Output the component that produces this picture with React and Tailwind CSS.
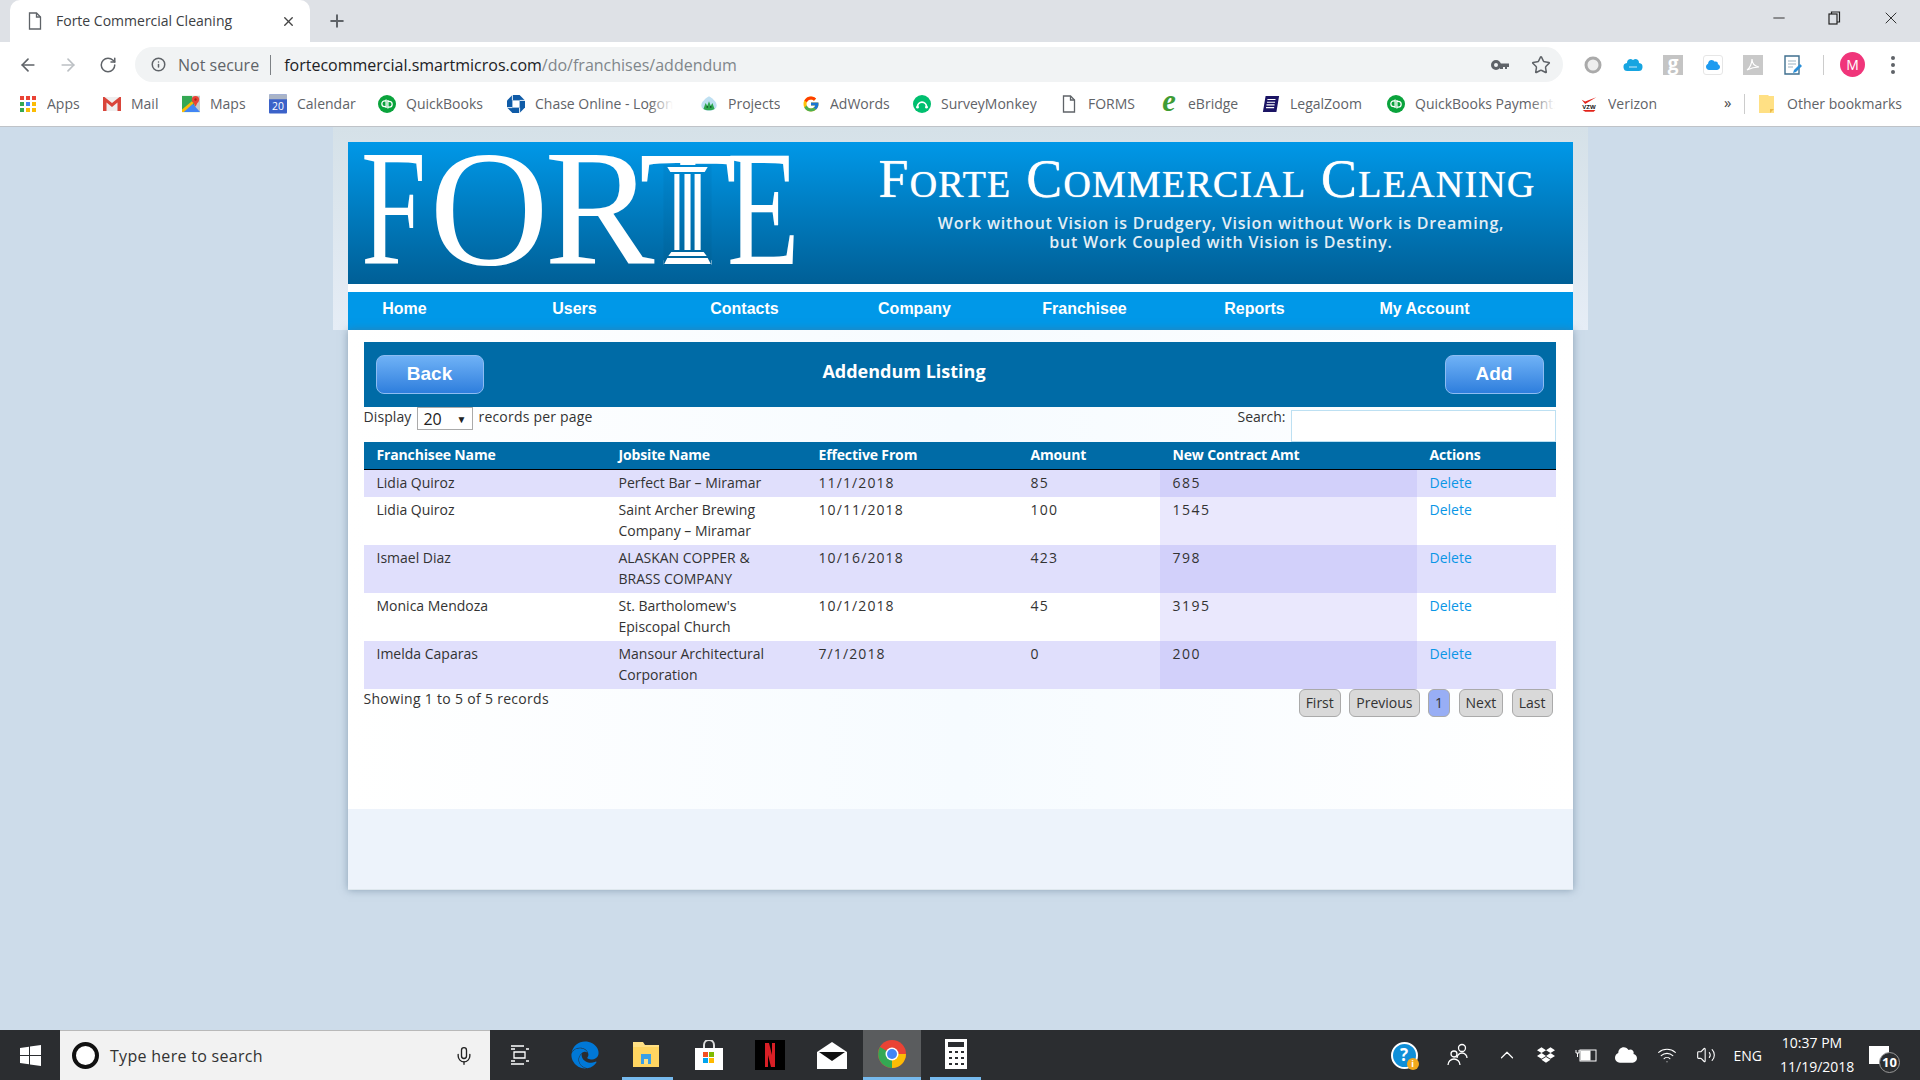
import { ArrowLeft, ArrowRight, RotateCw, Info, Star, Plus, X, Mic, ChevronUp, Volume2, Minus, Wifi } from 'lucide-react'
import { FcGoogle } from 'react-icons/fc'
import { FaEdge, FaDropbox, FaCloud } from 'react-icons/fa'

const navItems = ['Home', 'Users', 'Contacts', 'Company', 'Franchisee', 'Reports', 'My Account']

const rows = [
  { name: 'Lidia Quiroz', site: 'Perfect Bar – Miramar', from: '11/1/2018', amount: '85', total: '685' },
  { name: 'Lidia Quiroz', site: 'Saint Archer Brewing Company – Miramar', from: '10/11/2018', amount: '100', total: '1545' },
  { name: 'Ismael Diaz', site: 'ALASKAN COPPER & BRASS COMPANY', from: '10/16/2018', amount: '423', total: '798' },
  { name: 'Monica Mendoza', site: "St. Bartholomew's Episcopal Church", from: '10/1/2018', amount: '45', total: '3195' },
  { name: 'Imelda Caparas', site: 'Mansour Architectural Corporation', from: '7/1/2018', amount: '0', total: '200' },
]

function AppsIcon() {
  const colors = ['#ea4335', '#ea4335', '#ea4335', '#34a853', '#4285f4', '#fbbc05', '#34a853', '#fbbc05', '#fbbc05']
  return (
    <svg width="18" height="18" viewBox="0 0 18 18">
      {colors.map((c, i) => (
        <rect key={i} x={1 + (i % 3) * 6} y={1 + Math.floor(i / 3) * 6} width="4" height="4" fill={c} />
      ))}
    </svg>
  )
}

function MailIcon() {
  return (
    <svg width="19" height="18" viewBox="0 0 18 18">
      <path d="M0 2h18v14H0z" fill="#efefef" />
      <path d="M0 2v14h3.500V7.500L9 12l5.500-4.500V16H18V2h-1.500L9 8 1.500 2z" fill="#d9453a" />
    </svg>
  )
}

function MapsIcon() {
  return (
    <svg width="20" height="20" viewBox="0 0 20 20">
      <path d="M0 1h20v18H0z" fill="#34a853" />
      <path d="M11 1h9v18h-4z" fill="#c9c9c9" />
      <path d="M0 19 11 9l9 10z" fill="#4285f4" />
      <path d="M0 16 11 7l2 2L2 19H0z" fill="#fbbc05" />
      <circle cx="15" cy="5" r="4" fill="#ea4335" />
      <path d="M12 7h6l-3 6z" fill="#ea4335" />
      <circle cx="15" cy="5" r="1.300" fill="#a52714" />
    </svg>
  )
}

function CalendarIcon() {
  return (
    <svg width="19" height="20" viewBox="0 0 19 20">
      <rect y="0" width="19" height="20" rx="1" fill="#3b62c9" />
      <rect y="0" width="19" height="5" fill="#aab4c6" />
      <text x="9.500" y="16" textAnchor="middle" fontSize="11" fill="#fff" fontFamily="Open Sans">20</text>
    </svg>
  )
}

function QbIcon() {
  return (
    <svg width="20" height="20" viewBox="0 0 20 20">
      <circle cx="10" cy="10" r="10" fill="#0aa33c" />
      <path d="M9 5v9.500M11 5.500v9.500" stroke="#fff" strokeWidth="1.400" />
      <path d="M9 6.500H7.500a3 3 0 0 0 0 6.500H9M11 7h1.500a3 3 0 0 1 0 6.500H11" fill="none" stroke="#fff" strokeWidth="1.400" />
    </svg>
  )
}

function ChaseIcon() {
  return (
    <svg width="20" height="20" viewBox="0 0 20 20">
      <path d="M6 0h8l6 6v8l-6 6H6l-6-6V6z" fill="#0f5ba7" />
      <rect x="6" y="6" width="8" height="8" fill="#fff" />
      <path d="M6 0v6M14 20v-6M0 14h6M20 6h-6" stroke="#fff" strokeWidth="1" />
    </svg>
  )
}

function ProjectsIcon() {
  return (
    <svg width="21" height="19" viewBox="0 0 21 19">
      <path d="M10.500 1c5 3 9 7 9 11a9 6 0 0 1-18 0c0-4 4-8 9-11z" fill="#bfe0f2" />
      <path d="M4 16l2.500-7 2 3 2-5 2 5 2-3 2.500 7c-3 2-10 2-13 0z" fill="#2fa84f" />
      <circle cx="8.500" cy="13.500" r="1" fill="#12502a" />
      <circle cx="12.500" cy="13.500" r="1" fill="#12502a" />
    </svg>
  )
}

function SurveyIcon() {
  return (
    <svg width="20" height="20" viewBox="0 0 20 20">
      <circle cx="10" cy="10" r="10" fill="#00bf6f" />
      <path d="M5 13a5 5 0 0 1 10 0" fill="none" stroke="#fff" strokeWidth="2" />
      <circle cx="5" cy="13.500" r="1.500" fill="#fff" />
      <circle cx="15" cy="13.500" r="1.500" fill="#fff" />
    </svg>
  )
}

function FileIcon({ color = '#5f6368' }) {
  return (
    <svg width="16" height="18" viewBox="0 0 16 18" fill="none" stroke={color} strokeWidth="1.300">
      <path d="M2.500 1h7l4 4v12h-11z" />
      <path d="M9.500 1v4h4" />
    </svg>
  )
}

function EBridgeIcon() {
  return (
    <svg width="20" height="24" viewBox="0 0 20 24">
      <text x="10" y="20" textAnchor="middle" fontSize="34" fontStyle="italic" fontWeight="700" fill="#3f9c35" fontFamily="Liberation Serif">e</text>
    </svg>
  )
}

function LegalZoomIcon() {
  return (
    <svg width="20" height="20" viewBox="0 0 20 20">
      <path d="M4 1h15l-3 18H1z" fill="#1b1464" />
      <path d="M6 5h9M5.500 8h9M5 11h9M4.500 14h9" stroke="#fff" strokeWidth="1.200" />
    </svg>
  )
}

function VerizonIcon() {
  return (
    <svg width="21" height="20" viewBox="0 0 21 20">
      <path d="M2 5l4 5L19 2 6 7z" fill="#e2231a" />
      <rect x="0" y="10" width="21" height="6" fill="#fff" />
      <text x="10.500" y="15.500" textAnchor="middle" fontSize="7" fontWeight="700" fill="#111" fontFamily="Liberation Sans">VZW</text>
      <path d="M3 17h15l-2 2H6z" fill="#e2231a" />
    </svg>
  )
}

function FolderIcon() {
  return (
    <svg width="17" height="20" viewBox="0 0 17 20">
      <path d="M1 1h9l1 1h5v17H1z" fill="#ffe084" />
      <path d="M12 19v-4h4z" fill="#e9b949" />
    </svg>
  )
}

const bookmarks = [
  { label: 'Apps', icon: <AppsIcon />, width: 'w-[84px]' },
  { label: 'Mail', icon: <MailIcon />, width: 'w-[79px]' },
  { label: 'Maps', icon: <MapsIcon />, width: 'w-[87px]' },
  { label: 'Calendar', icon: <CalendarIcon />, width: 'w-[109px]' },
  { label: 'QuickBooks', icon: <QbIcon />, width: 'w-[129px]' },
  { label: 'Chase Online - Logon', icon: <ChaseIcon />, width: 'w-[193px]', fade: true },
  { label: 'Projects', icon: <ProjectsIcon />, width: 'w-[102px]' },
  { label: 'AdWords', icon: <FcGoogle size={18} />, width: 'w-[111px]' },
  { label: 'SurveyMonkey', icon: <SurveyIcon />, width: 'w-[147px]' },
  { label: 'FORMS', icon: <FileIcon />, width: 'w-[100px]' },
  { label: 'eBridge', icon: <EBridgeIcon />, width: 'w-[102px]' },
  { label: 'LegalZoom', icon: <LegalZoomIcon />, width: 'w-[125px]' },
  { label: 'QuickBooks Payments', icon: <QbIcon />, width: 'w-[193px]', fade: true },
  { label: 'Verizon', icon: <VerizonIcon />, width: 'w-[144px]' },
]

function Bookmark({ item }) {
  return (
    <div className={`${item.width} flex items-center gap-[10px] shrink-0`}>
      <span className="w-[18px] h-[20px] flex items-center justify-center shrink-0">{item.icon}</span>
      <span className="relative block max-w-[140px] overflow-hidden whitespace-nowrap">
        {item.label}
        {item.fade && <span className="absolute right-0 top-0 bottom-0 w-[24px] bg-gradient-to-r from-transparent to-white" />}
      </span>
    </div>
  )
}

function BrowserChrome() {
  return (
    <div className="bg-white text-[#3c4043] border-b border-[#bfc3c8] h-[127px] shrink-0">
      <div className="h-[42px] bg-[#dee1e6] flex items-end pl-[10px]">
        <div className="w-[300px] h-[42px] bg-white rounded-t-[10px] flex items-center pl-[17px] pr-[14px] text-[14px]">
          <FileIcon />
          <span className="ml-[13px] flex-1 -mt-[2px]">Forte Commercial Cleaning</span>
          <X size={15} strokeWidth={2.2} className="text-[#444]" />
        </div>
        <Plus size={20} strokeWidth={2.4} className="ml-[17px] mb-[11px] text-[#5f6368]" />
        <div className="ml-auto flex items-center h-full pb-[6px] pr-[19px] gap-[40px] text-[#222]">
          <Minus size={18} strokeWidth={1.2} />
          <svg width="13" height="14" viewBox="0 0 13 14" fill="none" stroke="#222" strokeWidth="1.200">
            <rect x="1" y="3" width="8" height="10" />
            <path d="M3.500 3V1h8v10H9" />
          </svg>
          <X size={20} strokeWidth={1.1} />
        </div>
      </div>
      <div className="h-[42px] pt-[3px] flex items-center pl-[18px]">
        <ArrowLeft size={20} strokeWidth={2} className="text-[#5f6368]" />
        <ArrowRight size={20} strokeWidth={2} className="ml-[20px] text-[#bcc0c4]" />
        <RotateCw size={18} strokeWidth={2} className="ml-[21px] text-[#5f6368]" />
        <div className="ml-[18px] w-[1428px] h-[35px] rounded-full bg-[#f1f3f4] flex items-center pl-[16px] pr-[12px] text-[16px]">
          <Info size={15} strokeWidth={2.4} className="text-[#5f6368]" />
          <span className="ml-[12px] text-[#5f6368]">Not secure</span>
          <span className="ml-[11px] w-px h-[20px] bg-[#7d8185]" />
          <span className="ml-[13px] text-[#202124]">fortecommercial.smartmicros.com<span className="text-[#80868b]">/do/franchises/addendum</span></span>
          <span className="ml-auto flex items-center gap-[22px]">
            <svg width="18" height="12" viewBox="0 0 18 12">
              <circle cx="5" cy="6" r="3.500" fill="none" stroke="#5f6368" strokeWidth="3" />
              <path d="M9 4.500h9V8h-2v2h-2V8h-2v2H9z" fill="#5f6368" />
            </svg>
            <Star size={20} strokeWidth={1.8} className="text-[#5f6368]" />
          </span>
        </div>
        <div className="ml-[20px] flex items-center gap-[20px]">
          <svg width="20" height="20" viewBox="0 0 20 20">
            <circle cx="10" cy="10" r="7" fill="#eee" stroke="#aaa" strokeWidth="3" />
          </svg>
          <svg width="20" height="20" viewBox="0 0 20 20">
            <path d="M5 16a4 4 0 0 1-1-8 4 4 0 0 1 4-4l2 1 2-1a4 4 0 0 1 4 4 4 4 0 0 1-1 8z" fill="#16a5e1" />
            <path d="M6 12h8" stroke="#8ed3f2" strokeWidth="1.500" />
          </svg>
          <span className="w-[20px] h-[20px] bg-[#c4c4c4] text-white font-bold text-[19px] leading-[17px] text-center">g</span>
          <span className="w-[20px] h-[20px] rounded-[3px] border border-[#e6e6e6] flex items-center justify-center">
            <FaCloud size={14} className="text-[#1d9bf0]" />
          </span>
          <svg width="20" height="20" viewBox="0 0 20 20">
            <rect width="20" height="20" fill="#c9c9c9" />
            <path d="M4 15c3-2 5-7 5-11 0 4 2 7 7 8-4 0-8 1-12 3z" fill="none" stroke="#fff" strokeWidth="1.200" />
          </svg>
          <svg width="20" height="20" viewBox="0 0 20 20" fill="none">
            <path d="M2 1h14v18H2z" stroke="#3f6f8f" strokeWidth="1.400" />
            <path d="M5 6h8M5 9h8M5 12h5" stroke="#9db3c2" strokeWidth="1.200" />
            <path d="M10 18l1-3 6-6 2 2-6 6z" fill="#2b8fd8" />
          </svg>
        </div>
        <span className="ml-[20px] w-px h-[20px] bg-[#ccc]" />
        <span className="ml-[16px] w-[25px] h-[25px] rounded-full bg-[#f0357a] text-white text-[14px] flex items-center justify-center">M</span>
        <span className="ml-[26px] flex flex-col gap-[3px]">
          <span className="w-[4px] h-[4px] rounded-full bg-[#5f6368]" />
          <span className="w-[4px] h-[4px] rounded-full bg-[#5f6368]" />
          <span className="w-[4px] h-[4px] rounded-full bg-[#5f6368]" />
        </span>
      </div>
      <div className="h-[39px] flex items-center pl-[19px] text-[14px] text-[#5f6368]">
        {bookmarks.map((b) => (
          <Bookmark key={b.label} item={b} />
        ))}
        <span className="text-[15px] text-[#444] w-[20px] -mt-[2px]">»</span>
        <span className="w-px h-[20px] bg-[#ccc]" />
        <span className="ml-[13px] flex items-center gap-[12px]">
          <FolderIcon />
          Other bookmarks
        </span>
      </div>
    </div>
  )
}

function LogoT() {
  return (
    <span className="relative inline-block">
      T
      <svg width="50" height="100" viewBox="0 0 48 100" preserveAspectRatio="none" className="absolute left-1/2 -translate-x-1/2 top-[23px]">
        <defs>
          <linearGradient id="shaft" x1="0" y1="0" x2="0" y2="1">
            <stop offset="0" stopColor="#0088d2" />
            <stop offset="1" stopColor="#006299" />
          </linearGradient>
        </defs>
        <rect x="0" y="0" width="48" height="100" fill="url(#shaft)" />
        <path d="M4 2h40l-3 5H7z" fill="#fff" />
        <rect x="11" y="9" width="5" height="76" fill="#fff" />
        <rect x="21" y="9" width="6" height="76" fill="#fff" />
        <rect x="31" y="9" width="6" height="76" fill="#fff" />
        <path d="M8 87h32l3 4H5z" fill="#fff" />
        <path d="M4 93h40l3 6H1z" fill="#fff" />
      </svg>
    </span>
  )
}

function Banner() {
  return (
    <div className="h-[142px] bg-gradient-to-b from-[#0098e8] to-[#005f96] flex text-white overflow-hidden">
      <div className="w-[500px] h-[133px] shrink-0 flex font-['Liberation_Serif'] text-[165px] leading-[133px] pl-[13px]">
        <span className="w-[69px] scale-x-[0.71] origin-left">F</span>
        <span className="w-[115px] origin-left">O</span>
        <span className="w-[94px] origin-left">R</span>
        <span className="w-[88px] origin-left scale-x-[0.97]"><LogoT /></span>
        <span className="w-[70px] scale-x-[0.72] origin-left">E</span>
      </div>
      <div className="flex-1 pl-[31px] pt-[7px]">
        <div className="font-['Liberation_Serif'] text-[54px] leading-[60px] tracking-[1.2px] [font-variant:small-caps] [text-shadow:0_0_1px_#ffffff] whitespace-nowrap">Forte Commercial Cleaning</div>
        <div className="w-[655px] pl-[30px] text-center text-[16px] leading-[18.5px] font-semibold tracking-[0.8px] text-[#e3eef5] mt-[5px] whitespace-nowrap">
          Work without Vision is Drudgery, Vision without Work is Dreaming,
          <br />
          but Work Coupled with Vision is Destiny.
        </div>
      </div>
    </div>
  )
}

function PageButton({ children, active }) {
  return (
    <span className={`h-[28px] px-[6px] rounded-[6px] border border-[#aaaaaa] flex items-center ${active ? 'bg-[#98aef5]' : 'bg-[#d9d9d9]'}`}>
      {children}
    </span>
  )
}

function HeaderButton({ children, width }) {
  return (
    <button className={`${width} h-[39px] rounded-[8px] border border-[#8dbcf2] bg-gradient-to-b from-[#6fb2f6] to-[#2d7edd] text-white font-['Liberation_Sans'] font-bold text-[19px]`}>
      {children}
    </button>
  )
}

function Listing() {
  return (
    <div className="w-[1225px] mx-auto shadow-[0_0_8px_rgba(80,110,135,0.55)] bg-[#edf3fb] h-[560px] border-b border-[#dfe8ee]">
      <div className="h-[479px] bg-gradient-to-r from-white via-[#f6fbff] to-white pl-[16px] pr-[17px] pt-[12px] text-[14px] text-[#333]">
        <div className="h-[65px] bg-[#006ba6] flex items-center px-[12px]">
          <HeaderButton width="w-[108px]">Back</HeaderButton>
          <h2 className="flex-1 pr-[120px] text-center text-white text-[18px] font-bold -mt-[6px]">Addendum Listing</h2>
          <HeaderButton width="w-[99px]">Add</HeaderButton>
        </div>
        <div className="h-[35px] flex justify-between">
          <div className="flex items-start leading-[20px]">
            <span className="tracking-[0.1px]">Display</span>
            <span className="ml-[6px] w-[56px] h-[23px] border border-[#aaa] bg-white flex items-center justify-between pl-[5px] pr-[6px] text-[16px] text-[#222]">
              20<span className="text-[10px] text-[#222]">▼</span>
            </span>
            <span className="ml-[5px] tracking-[0.2px]">records per page</span>
          </div>
          <div className="flex items-start leading-[20px]">
            <span>Search:</span>
            <input className="ml-[5px] w-[265px] h-[32px] mt-[3px] border border-[#bde0f2] bg-white" />
          </div>
        </div>
        <table className="w-full table-fixed border-collapse leading-[21px]">
          <colgroup>
            <col className="w-[242px]" />
            <col className="w-[200px]" />
            <col className="w-[212px]" />
            <col className="w-[142px]" />
            <col className="w-[257px]" />
            <col className="w-[139px]" />
          </colgroup>
          <thead>
            <tr className="h-[27px] bg-[#006ba6] text-white text-left font-bold border-b border-black tracking-[-0.15px]">
              <th className="pl-[13px] pb-[1px]">Franchisee Name</th>
              <th className="pl-[13px] pb-[1px]">Jobsite Name</th>
              <th className="pl-[13px] pb-[1px]">Effective From</th>
              <th className="pl-[13px] pb-[1px]">Amount</th>
              <th className="pl-[13px] pb-[1px]">New Contract Amt</th>
              <th className="pl-[13px] pb-[1px]">Actions</th>
            </tr>
          </thead>
          <tbody>
            {rows.map((r, i) => (
              <tr key={i} className={i % 2 === 0 ? 'bg-[#e0dffc]' : 'bg-white'}>
                <td className="px-[13px] pt-[2px] pb-[4px] align-top">{r.name}</td>
                <td className="px-[13px] pt-[2px] pb-[4px] align-top">{r.site}</td>
                <td className="px-[13px] pt-[2px] pb-[4px] align-top tracking-[1.1px]">{r.from}</td>
                <td className="px-[13px] pt-[2px] pb-[4px] align-top tracking-[1.2px]">{r.amount}</td>
                <td className={`px-[13px] pt-[2px] pb-[4px] align-top tracking-[1.5px] ${i % 2 === 0 ? 'bg-[#d2d0fa]' : 'bg-[#eae8fd]'}`}>{r.total}</td>
                <td className="px-[13px] pt-[2px] pb-[4px] align-top text-[#0a96e6]">Delete</td>
              </tr>
            ))}
          </tbody>
        </table>
        <div className="flex justify-between leading-[20px]">
          <span className="tracking-[0.3px]">Showing 1 to 5 of 5 records</span>
          <div className="flex gap-[8.5px] pr-[3px]">
            <PageButton>First</PageButton>
            <PageButton>Previous</PageButton>
            <PageButton active>1</PageButton>
            <PageButton>Next</PageButton>
            <PageButton>Last</PageButton>
          </div>
        </div>
      </div>
    </div>
  )
}

function ChromeLogo() {
  return (
    <svg width="28" height="28" viewBox="0 0 28 28">
      <circle cx="14" cy="14" r="14" fill="#ea4335" />
      <path d="M14 14 2 7A14 14 0 0 0 14 28z" fill="#34a853" />
      <path d="M14 14h14a14 14 0 0 1-14 14z" fill="#fbbc05" />
      <circle cx="14" cy="14" r="6.500" fill="#fff" />
      <circle cx="14" cy="14" r="5" fill="#4285f4" />
    </svg>
  )
}

function Taskbar() {
  return (
    <div className="h-[50px] shrink-0 bg-[#2b2d30] flex items-center text-white">
      <div className="w-[60px] flex justify-center">
        <svg width="21" height="21" viewBox="0 0 21 21" fill="#fff">
          <path d="M0 3l9-1.300V10H0zM10 1.500 21 0v10H10zM0 11h9v8.300L0 18zM10 11h11v10l-11-1.500z" />
        </svg>
      </div>
      <div className="w-[430px] h-[50px] bg-[#f2f2f2] border-t border-[#b9b9b9] flex items-center pl-[12px] pr-[16px] text-[#333] text-[16px]">
        <span className="w-[27px] h-[27px] rounded-full border-[4px] border-[#111] bg-white" />
        <span className="ml-[11px] flex-1 tracking-[0.3px]">Type here to search</span>
        <Mic size={20} strokeWidth={1.6} className="text-[#222]" />
      </div>
      <div className="ml-[20px] w-[20px] flex justify-center">
        <svg width="20" height="22" viewBox="0 0 20 22" fill="none" stroke="#fff" strokeWidth="1.300">
          <path d="M1 2h13M4 8h11v6H4zM1 20h13M1 5h4M1 17h4M16 5h3M16 17h3" />
        </svg>
      </div>
      <div className="ml-[31px] w-[51px] h-[50px] flex items-center justify-center pr-[4px]">
        <FaEdge size={28} className="text-[#0078d7]" />
      </div>
      <div className="ml-[10px] w-[51px] h-[50px] flex items-center justify-center border-b-[3px] border-[#76b9ed] pr-[4px]">
        <svg width="28" height="28" viewBox="0 0 28 28">
          <path d="M1 2h10l2 3h14v22H1z" fill="#ffe084" />
          <path d="M1 7h26v20H1z" fill="#ffd561" />
          <path d="M9 14h10v10H9z" fill="#3aa0e8" />
          <path d="M12 19h4v5h-4z" fill="#ffe084" />
        </svg>
      </div>
      <div className="ml-[10px] w-[51px] flex justify-center">
        <svg width="28" height="30" viewBox="0 0 28 30">
          <path d="M9 8V5a5 5 0 0 1 10 0v3" fill="none" stroke="#ddd" strokeWidth="2" />
          <rect x="0" y="8" width="28" height="22" fill="#fff" />
          <rect x="8" y="12" width="5" height="5" fill="#f25022" />
          <rect x="14" y="12" width="5" height="5" fill="#7fba00" />
          <rect x="8" y="18" width="5" height="5" fill="#00a4ef" />
          <rect x="14" y="18" width="5" height="5" fill="#ffb900" />
        </svg>
      </div>
      <div className="ml-[10px] w-[51px] flex justify-center">
        <svg width="30" height="30" viewBox="0 0 30 30">
          <rect width="30" height="30" fill="#000" />
          <path d="M10 3h4l6 24h-4zM10 3h3v24h-3zM17 3h3v24h-3z" fill="#d81f26" />
        </svg>
      </div>
      <div className="ml-[11px] w-[51px] flex justify-center">
        <svg width="30" height="27" viewBox="0 0 30 27">
          <path d="M0 10 15 0l15 10v17H0z" fill="#fff" />
          <path d="M2 10h26L15 19z" fill="#111" />
        </svg>
      </div>
      <div className="ml-[6px] w-[58px] h-[50px] bg-[#5a5c5e] flex items-center justify-center border-b-[3px] border-[#76b9ed]">
        <ChromeLogo />
      </div>
      <div className="ml-[9px] w-[51px] h-[50px] flex items-center justify-center border-b-[3px] border-[#76b9ed]">
        <svg width="22" height="30" viewBox="0 0 22 30">
          <rect width="22" height="30" fill="#fff" />
          <rect x="3" y="3" width="16" height="5" fill="#2b2d30" />
          <path d="M4 12h3v2H4zM10 12h3v2h-3zM16 12h3v2h-3zM4 18h3v2H4zM10 18h3v2h-3zM16 18h3v2h-3zM4 24h3v2H4zM10 24h3v2h-3zM16 24h3v2h-3z" fill="#2b2d30" />
        </svg>
      </div>
      <div className="ml-auto flex items-center pr-[31px]">
        <span className="relative w-[27px] h-[27px] rounded-full bg-[#0f8fd8] border-[2px] border-white flex items-center justify-center text-[17px] font-bold mr-[29px]">
          ?
          <span className="absolute -right-[3px] -bottom-[3px] w-[12px] h-[12px] rounded-full bg-[#f2a81d] text-[9px] leading-[12px] text-center">i</span>
        </span>
        <svg width="22" height="24" viewBox="0 0 22 24" fill="none" stroke="#fff" strokeWidth="1.300" className="mr-[27px]">
          <circle cx="15" cy="5" r="3.500" />
          <path d="M10 15a5 5 0 0 1 10 0" />
          <circle cx="7" cy="11" r="3" />
          <path d="M1 22a6 6 0 0 1 12 0" />
        </svg>
        <ChevronUp size={22} strokeWidth={1.3} className="mr-[19px]" />
        <FaDropbox size={18} className="mr-[20px]" />
        <svg width="22" height="16" viewBox="0 0 22 16" fill="none" stroke="#fff" className="mr-[18px]">
          <rect x="5" y="3" width="16" height="11" />
          <rect x="6" y="4" width="9" height="9" fill="#fff" />
          <path d="M1 3v3h3V3M2.500 6v4" />
        </svg>
        <FaCloud size={22} className="mr-[20px]" />
        <Wifi size={20} strokeWidth={1.3} className="mr-[19px]" />
        <Volume2 size={20} strokeWidth={1.3} className="mr-[18px]" />
        <span className="text-[14px] mr-[18px]">ENG</span>
        <span className="text-[14px] leading-[24px] text-center w-[64px]">
          10:37 PM
          <br />
          11/19/2018
        </span>
        <span className="relative ml-[25px] w-[20px] h-[18px] bg-white">
          <span className="absolute -right-[11px] -bottom-[9px] w-[21px] h-[21px] rounded-full bg-[#2b2d30] border border-[#999] text-[13px] font-bold leading-[19px] text-center">10</span>
        </span>
      </div>
    </div>
  )
}

export default function App() {
  return (
    <div className="h-screen overflow-hidden flex flex-col bg-[#cddcea] font-['Open_Sans',sans-serif]">
      <BrowserChrome />
      <main className="flex-1 overflow-hidden">
        <div className="w-[1255px] mx-auto px-[15px] pt-[15px] bg-gradient-to-b from-[#d5e1e8] to-[#e6edf6]">
          <Banner />
          <div className="h-[8px] bg-white" />
          <nav className="h-[38px] bg-[#0098e8] flex">
            <div className="flex -ml-[28px] text-white font-['Liberation_Sans'] font-bold text-[16px]">
              {navItems.map((n) => (
                <a key={n} className="w-[170px] text-center leading-[33px]">{n}</a>
              ))}
            </div>
          </nav>
        </div>
        <Listing />
      </main>
      <Taskbar />
    </div>
  )
}
